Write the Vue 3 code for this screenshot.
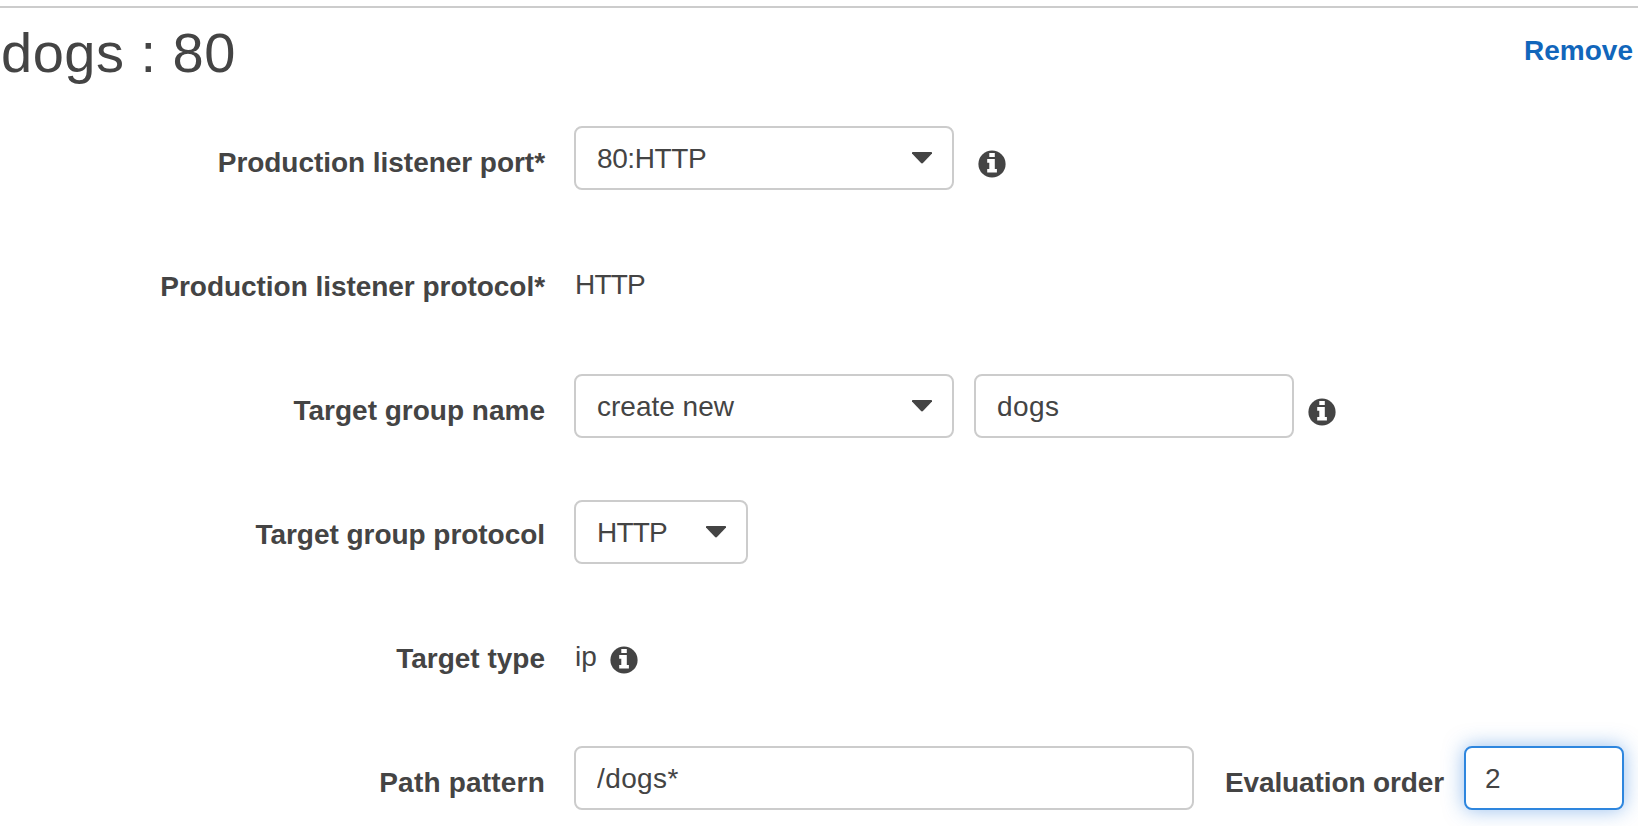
<script setup>
import { ref, h } from 'vue'

const pathPattern = ref('/dogs*')
const groupName = ref('dogs')
const order = ref('2')

const InfoIcon = () =>
  h('svg', { viewBox: '0 0 28 28', width: 28, height: 28, 'aria-label': 'Info' }, [
    h('circle', { cx: 14, cy: 14, r: 13.6, fill: '#444' }),
    h('path', { d: 'M11.3 3h5.5v4h-5.5zM9.2 9h7.6v10h2.1v3.6H9.2V19h2.1v-6.2H9.2z', fill: '#fff' }),
  ])

const Caret = () =>
  h('svg', { viewBox: '0 0 20 12', width: 20, height: 12 }, [
    h('path', { d: 'M.8 0h18.4q.8 0 .8.8v.7L11.2 10.8q-1.2 1.2-2.4 0L0 1.5V.8Q0 0 .8 0z', fill: '#444' }),
  ])
</script>

<template>
  <section class="panel">
    <header class="head">
      <h1>dogs : 80</h1>
      <a class="remove">Remove</a>
    </header>

    <div class="row">
      <label class="label port">Production listener port*</label>
      <div class="controls">
        <div class="box select wide"><span class="tight">80:HTTP</span><Caret /></div>
        <InfoIcon class="info far" />
      </div>
    </div>

    <div class="row">
      <label class="label protocol">Production listener protocol*</label>
      <div class="controls low"><span class="value caps">HTTP</span></div>
    </div>

    <div class="row">
      <label class="label name">Target group name</label>
      <div class="controls">
        <div class="box select wide"><span>create new</span><Caret /></div>
        <input v-model="groupName" class="box group" />
        <InfoIcon class="info near" />
      </div>
    </div>

    <div class="row">
      <label class="label gproto">Target group protocol</label>
      <div class="controls low">
        <div class="box select small"><span class="caps">HTTP</span><Caret /></div>
      </div>
    </div>

    <div class="row">
      <label class="label type">Target type</label>
      <div class="controls low">
        <span class="value">ip</span>
        <InfoIcon class="info inline" />
      </div>
    </div>

    <div class="row">
      <label class="label path">Path pattern</label>
      <div class="controls">
        <input v-model="pathPattern" class="box pattern" />
        <label class="label eval">Evaluation order</label>
        <input v-model="order" class="box order active" />
      </div>
    </div>
  </section>
</template>

<style>
html,
body {
  overflow: hidden;
  background: #fff;
}
</style>

<style scoped>
.panel {
  box-sizing: border-box;
  width: 100%;
  height: 826px;
  padding-top: 6px;
  overflow: hidden;
  color: #444;
  background: #fff;
  font: 28px/32px "Liberation Sans", Arial, sans-serif;
}
.head {
  box-sizing: border-box;
  height: 90px;
  display: flex;
  justify-content: space-between;
  align-items: flex-start;
  border-top: 2px solid #ccc;
  padding-right: 5px;
}
h1 {
  margin: 13px 0 0 1px;
  font-size: 56px;
  line-height: 64px;
  font-weight: 400;
  letter-spacing: 0.5px;
}
.remove {
  margin-top: 27px;
  color: #1166bb;
  font-weight: 700;
}
.row {
  height: 124px;
  display: grid;
  grid-template-columns: 545px 1fr;
  column-gap: 29px;
  align-items: center;
}
.label {
  padding-top: 10px;
  text-align: right;
  font-weight: 700;
  white-space: nowrap;
}
.port,
.protocol,
.gproto {
  letter-spacing: -0.04px;
}
.path {
  letter-spacing: 0.2px;
}
.controls {
  display: flex;
  align-items: center;
}
.low {
  padding-top: 4px;
}
.value {
  padding-top: 2px;
  margin-left: 1px;
}
.caps {
  letter-spacing: -0.8px;
}
.tight {
  letter-spacing: -0.4px;
}
.box {
  box-sizing: border-box;
  height: 64px;
  border: 2px solid #ccc;
  border-radius: 8px;
  padding: 2px 20px 0 21px;
  background: #fff;
  color: #444;
  font: inherit;
  outline: none;
}
.select {
  display: flex;
  align-items: center;
  justify-content: space-between;
}
.select svg {
  margin-bottom: 2px;
}
.wide {
  width: 380px;
}
.small {
  width: 174px;
}
.group {
  width: 320px;
  margin-left: 20px;
  letter-spacing: 0.4px;
}
.pattern {
  width: 620px;
  letter-spacing: 0.4px;
}
.order {
  width: 160px;
  margin-left: 20px;
  padding-left: 19px;
}
.active {
  border-color: #2e86de;
  box-shadow: 0 0 20px rgba(46, 125, 222, 0.5);
}
.info {
  flex: none;
  margin-top: 12px;
}
.far {
  margin-left: 24px;
}
.near {
  margin-left: 14px;
}
.inline {
  margin: 8px 0 0 13px;
}
.eval {
  margin-left: 31px;
  letter-spacing: -0.12px;
}
</style>
